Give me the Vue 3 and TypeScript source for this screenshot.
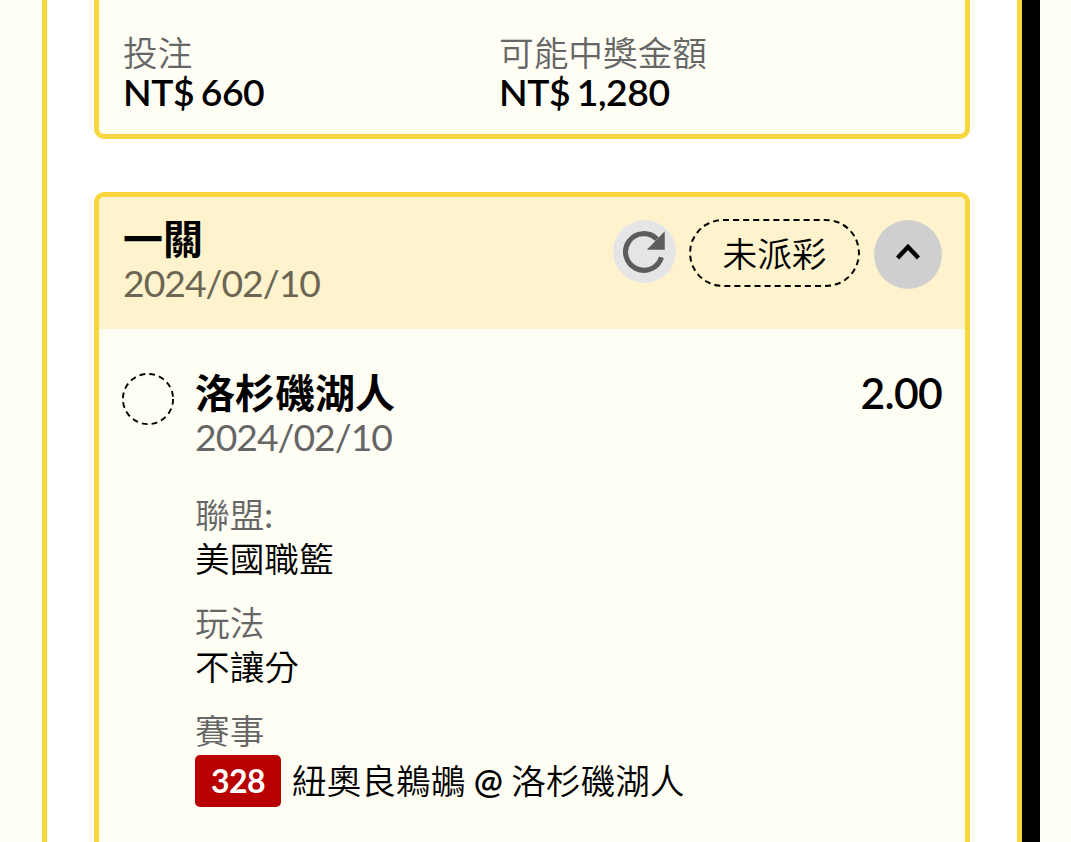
<template>
  <div class="page">
    <div class="panel">
      <section class="card summary-card">
        <div v-for="item in summary" :key="item.label" class="summary-item">
          <div class="label">{{ item.label }}</div>
          <div class="amount">{{ item.value }}</div>
        </div>
      </section>

      <section class="card bet-card">
        <header class="bet-header">
          <div class="bet-heading">
            <div class="title">一關</div>
            <div class="date">2024/02/10</div>
          </div>
          <div class="bet-actions">
            <button class="refresh-btn" type="button" aria-label="重新整理">
              <svg viewBox="0 0 64 64">
                <path d="M49.2 37.8A18.6 18.6 0 1 1 44.6 19.4" fill="none" stroke="#5c5c5c" stroke-width="5.2" />
                <path d="M52.6 11.5V30.3H34.4Z" fill="#5c5c5c" />
              </svg>
            </button>
            <span class="status">未派彩</span>
            <button class="toggle-btn" type="button" aria-label="收合" @click="expanded = !expanded">
              <svg viewBox="0 0 68 68" :class="{ 'is-collapsed': !expanded }">
                <path d="M23.6 37.4L34 26.4L44.4 37.4" fill="none" stroke="#000" stroke-width="4.4" />
              </svg>
            </button>
          </div>
        </header>

        <div v-if="expanded" class="bet-body">
          <svg class="result-mark" viewBox="0 0 54 54">
            <circle cx="27" cy="27" r="25.1" />
          </svg>
          <div class="bet-content">
            <div class="pick-row">
              <div>
                <div class="title">洛杉磯湖人</div>
                <div class="date">2024/02/10</div>
              </div>
              <div class="odds">2.00</div>
            </div>
            <div v-for="row in details" :key="row.label" class="detail">
              <div class="label">{{ row.label }}<span v-if="row.colon" class="colon">:</span></div>
              <div class="detail-value">{{ row.value }}</div>
            </div>
            <div class="detail">
              <div class="label">賽事</div>
              <div class="match">
                <span class="match-no">328</span>
                <span class="match-name">紐奧良鵜鶘 <span class="at">@</span> 洛杉磯湖人</span>
              </div>
            </div>
          </div>
        </div>
      </section>
    </div>
    <div class="edge"></div>
  </div>
</template>

<script setup lang="ts">
import { ref } from 'vue';

interface Field {
  label: string;
  value: string;
  colon?: boolean;
}

const expanded = ref(true);

const summary: Field[] = [
  { label: '投注', value: 'NT$ 660' },
  { label: '可能中獎金額', value: 'NT$ 1,280' },
];

const details: Field[] = [
  { label: '聯盟', value: '美國職籃', colon: true },
  { label: '玩法', value: '不讓分' },
];
</script>

<style>
body {
  background: #fffef5;
}
</style>

<style scoped>
.page {
  display: flex;
  box-sizing: border-box;
  height: 842px;
  padding-left: 42px;
  overflow: hidden;
  font-family: Lato, "Noto Sans CJK TC", sans-serif;
  color: #000;
}

.panel {
  box-sizing: border-box;
  width: 980px;
  padding: 0 47px;
  border: solid #f8d73e;
  border-width: 0 5px;
  background: #fff;
}

.edge {
  width: 18px;
  background: #000;
}

.card {
  box-sizing: border-box;
  border: 5px solid #f8d73e;
  border-radius: 10px;
  background: #fffef5;
  overflow: hidden;
}

.summary-card {
  display: flex;
  height: 139px;
  padding: 31px 24px 0;
  border-top: 0;
  border-radius: 0 0 10px 10px;
}

.summary-item {
  width: 376px;
}

.label {
  height: 43px;
  font-size: 34.67px;
  font-weight: 350;
  line-height: 43px;
  color: #666;
}

.amount {
  margin-top: -4px;
  font-size: 37.33px;
  font-weight: 600;
  line-height: 43px;
  letter-spacing: -0.5px;
  word-spacing: -2px;
}

.bet-card {
  height: 700px;
  margin-top: 53px;
}

.bet-header {
  display: flex;
  justify-content: space-between;
  box-sizing: border-box;
  height: 132px;
  padding: 21px 23px 0 24px;
  background: #fff3cd;
}

.title {
  height: 43px;
  font-size: 40px;
  font-weight: 700;
  line-height: 43px;
}

.date {
  height: 44px;
  font-size: 37.33px;
  font-weight: 400;
  line-height: 44px;
  letter-spacing: -1px;
  color: #666;
}

.bet-header .date {
  color: #6b6654;
}

.bet-actions {
  display: flex;
  align-items: flex-start;
  gap: 14px;
  margin-top: 1px;
}

button {
  padding: 0;
  border: 0;
  border-radius: 50%;
}

button svg {
  display: block;
  width: 100%;
  height: 100%;
}

.refresh-btn {
  width: 63px;
  height: 63px;
  margin: 1px -1px 0 0;
  background: #e5e5e7;
}

.status {
  box-sizing: border-box;
  width: 171px;
  height: 68px;
  border: 2px dashed #000;
  border-radius: 34px;
  font-size: 34.67px;
  font-weight: 350;
  line-height: 66px;
  text-align: center;
}

.toggle-btn {
  width: 68px;
  height: 69px;
  margin-top: 1px;
  background: #cfcfcf;
}

.is-collapsed {
  transform: rotate(180deg);
}

.bet-body {
  display: flex;
  padding: 43px 23px 0 22px;
}

.result-mark {
  flex: 0 0 54px;
  height: 54px;
}

.result-mark circle {
  fill: none;
  stroke: #000;
  stroke-width: 1.9;
  stroke-dasharray: 5.8 4.1;
}

.bet-content {
  flex: 1;
  padding-left: 20px;
}

.pick-row {
  display: flex;
  justify-content: space-between;
  margin-bottom: 35px;
}

.odds {
  font-size: 42.67px;
  font-weight: 600;
  line-height: 41px;
  letter-spacing: -0.7px;
}

.detail {
  margin-bottom: 22px;
}

.detail .label {
  line-height: 41px;
}

.colon {
  font-weight: 500;
}

.detail-value {
  height: 43px;
  font-size: 34.67px;
  font-weight: 350;
  line-height: 43px;
}

.match {
  display: flex;
  align-items: center;
  gap: 11px;
  margin-top: 2px;
}

.match-no {
  width: 86px;
  height: 52px;
  border-radius: 5px;
  background: #b80000;
  font-size: 32px;
  font-weight: 700;
  line-height: 51px;
  letter-spacing: -0.6px;
  text-align: center;
  color: #fff;
}

.match-name {
  font-size: 34.67px;
  font-weight: 350;
  line-height: 52px;
  word-spacing: -1px;
  white-space: nowrap;
}

.at {
  font-weight: 600;
}
</style>
